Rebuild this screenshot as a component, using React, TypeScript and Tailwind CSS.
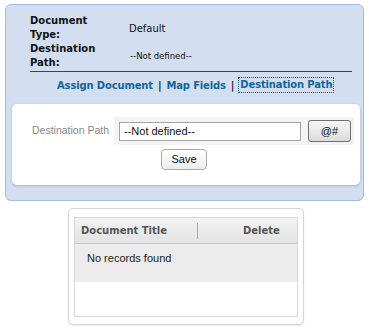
import React from "react"

const tahoma = "font-['DejaVu_Sans',Verdana,sans-serif]"
const arial = "font-['Liberation_Sans',Arial,sans-serif]"

function InfoRow({ label, value, small }: { label: string; value: string; small?: boolean }) {
  return (
    <div className="flex items-center">
      <div className={`w-[99px] pr-[28px] text-[10px] font-bold leading-[14px] text-[#111] ${tahoma}`}>{label}</div>
      <div className={`${small ? "text-[8.5px] pl-[1px]" : "text-[10px]"} text-[#111] ${tahoma}`}>{value}</div>
    </div>
  )
}

export default function App() {
  return (
    <div className="relative w-[369px] h-[330px] bg-white overflow-hidden">
      {/* top panel */}
      <div className="ml-[5px] mt-[4px] w-[359px] h-[197px] rounded-[6px] border border-[#9fbde8] bg-[#d3dff0] pt-[9px]">
        <div className="ml-[24px] w-[322px]">
          <InfoRow label="Document Type:" value="Default" />
          <InfoRow label="Destination Path:" value="--Not defined--" small />
          <div className="mt-[1px] border-t border-[#444]" />
        </div>

        <div className={`mt-[5px] flex items-center whitespace-nowrap pl-[51px] text-[10px] font-bold tracking-[-0.15px] text-[#14659a] ${tahoma}`}>
          <span>Assign Document</span>
          <span className="mx-[5px] text-[#222]">|</span>
          <span>Map Fields</span>
          <span className="ml-[5px] mr-[4px] text-[#222]">|</span>
          <span className="border border-dotted border-[#14659a] px-[1px] leading-[14px]">Destination Path</span>
        </div>

        <div className="ml-[6px] mt-[11px] w-[348px] h-[81px] rounded-[5px] bg-white shadow-[0_1px_3px_rgba(0,0,0,0.2)] pt-[13px]">
          <div className="flex items-center">
            <div className={`w-[102px] pl-[20px] whitespace-nowrap text-[10.5px] text-[#888] ${arial}`}>Destination Path</div>
            <div className="flex h-[28px] w-[240px] items-center bg-[#f4f4f4] pl-[5px]">
              <div className={`flex h-[19px] w-[182px] items-center border border-[#a5a5a5] bg-white pl-[4px] text-[11px] text-[#111] ${arial}`}>
                --Not defined--
              </div>
              <button className={`ml-[7px] h-[22px] w-[43px] rounded-[3px] border border-[#707070] bg-gradient-to-b from-[#f6f6f6] to-[#dcdcdc] text-[11px] text-[#111] ${arial}`}>
                @#
              </button>
            </div>
          </div>
          <div className="mt-[4px] flex justify-center pr-[4px]">
            <button className={`h-[21px] w-[46px] rounded-[4px] border border-[#aaa] bg-gradient-to-b from-white to-[#ececec] text-[11px] text-[#111] ${arial}`}>
              Save
            </button>
          </div>
        </div>
      </div>

      {/* records grid */}
      <div className="ml-[68px] mt-[7px] w-[236px] h-[117px] rounded-[5px] border border-[#d4d4d4] bg-white px-[5px] py-[8px] shadow-[0_1px_2px_rgba(0,0,0,0.08)]">
        <div className="h-[100px] border border-[#d8d8d8]">
          <div className={`flex h-[26px] items-center border-b border-[#c8c8c8] bg-gradient-to-b from-[#f3f3f3] to-[#e3e3e3] text-[10px] font-bold text-[#555] ${tahoma}`}>
            <div className="w-[122px] pl-[6px]">Document Title</div>
            <div className="h-[16px] border-l border-[#aaa]" />
            <div className="flex-1 pl-[45px]">Delete</div>
          </div>
          <div className={`h-[38px] bg-[#ececec] pl-[12px] pt-[6px] text-[11px] text-[#222] ${arial}`}>No records found</div>
        </div>
      </div>
    </div>
  )
}
